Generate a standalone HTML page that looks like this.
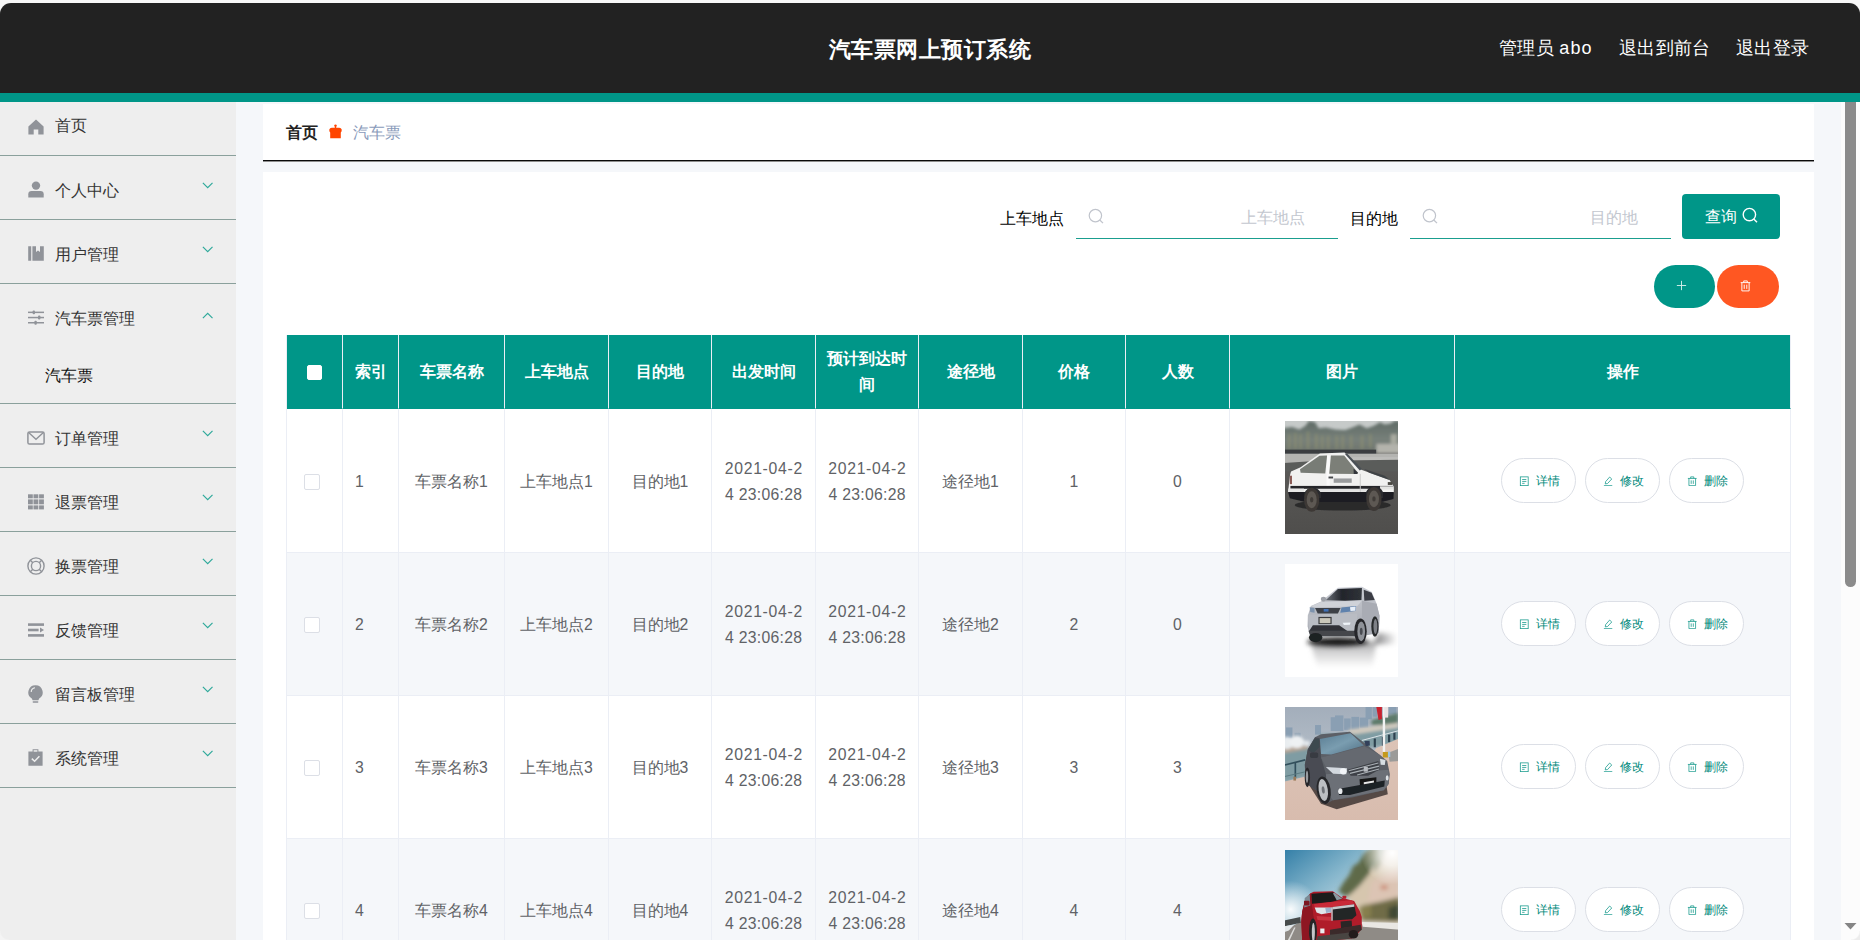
<!DOCTYPE html>
<html lang="zh">
<head>
<meta charset="utf-8">
<title>汽车票网上预订系统</title>
<style>
*{box-sizing:border-box;margin:0;padding:0}
html,body{width:1860px;height:940px;overflow:hidden}
body{position:relative;background:#f5f7fa;font-family:"Liberation Sans",sans-serif;color:#333;font-size:15.75px}
.abs{position:absolute}
/* header */
#topstrip{left:0;top:0;width:1860px;height:12px;background:#f7f7f7}
#header{left:0;top:3px;width:1860px;height:90px;background:#222;border-radius:11px 11px 0 0}
#teal{left:0;top:93px;width:1860px;height:9px;background:#009688}
#title{left:0;top:4px;width:1860px;height:90px;line-height:91px;text-align:center;color:#fff;font-size:22px;letter-spacing:0.5px;font-weight:bold}
.hr{top:3px;height:90px;line-height:91px;color:#fff;font-size:18px;letter-spacing:0.3px;white-space:nowrap}
/* sidebar */
#side{left:0;top:102px;width:236px;height:838px;background:#eee}
.mi{position:absolute;left:0;width:236px;height:64px;border-bottom:2px solid #8fa8a4}
.mi .tx{position:absolute;left:55px;top:0;height:64px;line-height:64px;font-size:15.75px;color:#333;white-space:nowrap}
.mi svg.ic{position:absolute;left:27px;top:23px;width:18px;height:18px}
.mi svg.ar{position:absolute;left:201px;top:24px;width:13px;height:13px}

#side svg{position:absolute}
.mt{position:absolute;left:55px;height:24px;line-height:24px;font-size:15.75px;color:#333;white-space:nowrap}
.ml{position:absolute;left:0;width:236px;height:1px;background:#8aa09c}
/* main */
#crumb{left:263px;top:104px;width:1551px;height:58px;background:linear-gradient(#fff 0,#fff 56px,#0a0a0a 56px,#0a0a0a 57px,#8f8f8f 57px,#8f8f8f 58px)}
#panel{left:263px;top:172px;width:1551px;height:768px;background:#fff}

/* crumb */
#crumb .home{position:absolute;left:23px;top:16.5px;height:24px;line-height:24px;font-size:15.75px;font-weight:bold;color:#222}
#crumb .cur{position:absolute;left:90px;top:17px;height:24px;line-height:24px;font-size:15.75px;color:#8a9bbb}
/* search */
.lab{position:absolute;height:24px;line-height:24px;font-size:15.75px;color:#000;white-space:nowrap}
.inp{position:absolute;height:45px;border-bottom:1px solid #1a9e8f}
.inp .ph{position:absolute;right:33px;top:11.5px;height:24px;line-height:24px;font-size:15.75px;color:#c3c7cf;white-space:nowrap}
.inp svg{position:absolute;left:12px;top:14px;width:17px;height:17px}
#qbtn{left:1682px;top:194px;width:98px;height:45px;background:#009688;border-radius:4px;color:#fff;font-size:15.75px}
#qbtn span{position:absolute;left:23px;top:11px;height:24px;line-height:24px}
#qbtn svg{position:absolute;left:60px;top:13.3px;width:17px;height:17px}
.pill{position:absolute;top:265px;height:43px;border-radius:22px}
/* table */
#tb{left:286px;top:335px;width:1505px;border-left:1px solid #ebeef5}
#tb .r{display:flex;width:1504px}
#tb .c{flex:none;position:relative;border-right:1px solid #ebeef5;border-bottom:1px solid #ebeef5;display:flex;align-items:center;justify-content:center;text-align:center;line-height:26px;font-size:15.75px;color:#606266}
#tb .h .c{height:74px;background:#009688;color:#fff;font-weight:bold;border-bottom-color:#009688}
#tb .b .c{height:143px;background:#fff;padding-top:2px}
#tb .b.first .c{height:144px;padding-top:3px}
#tb .b.first .ab{top:49px}
#tb .b.s .c{background:#f5f7fa}
.cb{width:16px;height:16px;border:1px solid #dcdfe6;border-radius:2px;background:#fff}
.ab{position:absolute;top:48px;width:75px;height:45px;border:1px solid #dcdfe6;border-radius:23px;background:#fff;color:#00897b;font-size:12px;line-height:43px;text-align:left}
.ab span{position:absolute;left:33.5px;top:1px;white-space:nowrap}
.ab svg{position:absolute;left:17px;top:16.5px;width:10.5px;height:10.5px}
.dt{white-space:nowrap}
.img{width:113px;height:113px;display:block}
#sbtrack{left:1841px;top:102px;width:19px;height:838px;background:#fcfcfc}
#sbthumb{left:1845px;top:96px;width:11px;height:491px;background:#8b8b8b;border-radius:6px}
</style>
</head>
<body>
<div id="topstrip" class="abs"></div>
<!-- MAIN -->
<div id="crumb" class="abs"><div class="home">首页</div>
<svg style="position:absolute;left:66px;top:20px;width:13px;height:15px" viewBox="0 0 13 15"><circle cx="6.5" cy="1.6" r="1.2" fill="#ff4500"/><rect x="5.8" y="1.6" width="1.4" height="4" fill="#ff4500"/><path fill="#ff4500" d="M1.2 14.3 V8.6 Q0 7.6 0.3 5.6 Q0.8 3.8 2.8 3.8 H10.2 Q12.2 3.8 12.7 5.6 Q13 7.6 11.8 8.6 V14.3 Z"/></svg>
<div class="cur">汽车票</div></div>
<div id="panel" class="abs"></div>
<div class="lab" style="left:1000px;top:206.5px">上车地点</div>
<div class="inp" style="left:1076px;top:194px;width:262px"><svg viewBox="0 0 17 17"><circle cx="7.4" cy="7.6" r="6.2" fill="none" stroke="#c0c4cc" stroke-width="1.2"/><path d="M11.8 12 L15 15.2" stroke="#c0c4cc" stroke-width="1.2" fill="none"/></svg><div class="ph">上车地点</div></div>
<div class="lab" style="left:1350px;top:206.5px">目的地</div>
<div class="inp" style="left:1410px;top:194px;width:261px"><svg viewBox="0 0 17 17"><circle cx="7.4" cy="7.6" r="6.2" fill="none" stroke="#c0c4cc" stroke-width="1.2"/><path d="M11.8 12 L15 15.2" stroke="#c0c4cc" stroke-width="1.2" fill="none"/></svg><div class="ph">目的地</div></div>
<div id="qbtn" class="abs"><span>查询</span><svg viewBox="0 0 17 17"><circle cx="7.4" cy="7.6" r="6.2" fill="none" stroke="#fff" stroke-width="1.4"/><path d="M11.8 12 L15 15.2" stroke="#fff" stroke-width="1.4" fill="none"/></svg></div>
<div class="pill" style="left:1654px;width:61px;background:#009688"><svg style="position:absolute;left:22px;top:15px;width:11px;height:11px" viewBox="0 0 13 13"><path d="M6.5 1 V12 M1 6.5 H12" stroke="#d6efeb" stroke-width="1.1" fill="none"/></svg></div>
<div class="pill" style="left:1717px;width:62px;background:#ff5722"><svg style="position:absolute;left:22.5px;top:14.5px;width:11px;height:12px" viewBox="0 0 13 14"><g fill="none" stroke="#fff" stroke-width="1.1"><path d="M0.8 3 H12.2 M4.4 3 V1 H8.6 V3 M2.2 3 V12.8 H10.8 V3 M5 5.4 V10.4 M8 5.4 V10.4"/></g></svg></div>
<div id="tb" class="abs">
<div class="r h"><div class="c" style="width:56px"><div class="cb" style="border-color:#fff;width:15px;height:15px;margin-left:-1px;margin-top:2px"></div></div><div class="c" style="width:56px">索引</div><div class="c" style="width:106px">车票名称</div><div class="c" style="width:104px">上车地点</div><div class="c" style="width:103px">目的地</div><div class="c" style="width:104px">出发时间</div><div class="c" style="width:103px"><div>预计到达时<br>间</div></div><div class="c" style="width:104px">途径地</div><div class="c" style="width:103px">价格</div><div class="c" style="width:104px">人数</div><div class="c" style="width:225px">图片</div><div class="c" style="width:336px">操作</div></div>
<div class="r b first"><div class="c" style="width:56px"><div class="cb" style="margin-left:-6px"></div></div><div class="c" style="width:56px"><span style="position:absolute;left:12px">1</span></div><div class="c" style="width:106px">车票名称1</div><div class="c" style="width:104px">上车地点1</div><div class="c" style="width:103px">目的地1</div><div class="c" style="width:104px"><div class="dt"><span style="letter-spacing:.7px;margin-right:-.7px">2021-04-2</span><br><span style="letter-spacing:.3px;margin-right:-.3px">4 23:06:28</span></div></div><div class="c" style="width:103px"><div class="dt"><span style="letter-spacing:.7px;margin-right:-.7px">2021-04-2</span><br><span style="letter-spacing:.3px;margin-right:-.3px">4 23:06:28</span></div></div><div class="c" style="width:104px">途径地1</div><div class="c" style="width:103px">1</div><div class="c" style="width:104px">0</div><div class="c" style="width:225px"><svg class="img" style="position:absolute;left:55px;top:12px" viewBox="0 0 940 940" preserveAspectRatio="none"><defs><linearGradient id="a1" x1="0" y1="0" x2="0" y2="1"><stop offset="0" stop-color="#626160"/><stop offset="0.5" stop-color="#585755"/><stop offset="1" stop-color="#4f4e4c"/></linearGradient><linearGradient id="t1" x1="0" y1="0" x2="0" y2="1"><stop offset="0" stop-color="#5f6b66"/><stop offset="0.6" stop-color="#77807a"/><stop offset="1" stop-color="#6d736c"/></linearGradient><filter id="b1" x="-5%" y="-5%" width="110%" height="110%"><feGaussianBlur stdDeviation="5"/></filter><filter id="b1b" x="-5%" y="-5%" width="110%" height="110%"><feGaussianBlur stdDeviation="12"/></filter><clipPath id="c1"><rect width="940" height="940"/></clipPath></defs><g clip-path="url(#c1)"><rect width="940" height="940" fill="url(#a1)"/><rect width="940" height="120" fill="#c6cac9"/><g filter="url(#b1b)"><path fill="url(#t1)" d="M-20 60 L60 50 L120 70 L170 40 L200 0 L250 10 L280 60 L340 55 L420 70 L500 75 L560 55 L620 30 L680 60 L740 40 L790 10 L830 30 L880 20 L910 0 L960 0 L960 260 L-20 260 Z"/><g fill="#8d9072" opacity=".7"><rect x="25" y="110" width="22" height="120"/><rect x="75" y="100" width="22" height="130"/><rect x="120" y="110" width="20" height="120"/><rect x="180" y="90" width="22" height="140"/><rect x="250" y="110" width="22" height="120"/><rect x="300" y="120" width="20" height="110"/><rect x="350" y="120" width="20" height="110"/><rect x="420" y="120" width="20" height="110"/><rect x="470" y="120" width="20" height="110"/><rect x="540" y="120" width="20" height="110"/><rect x="630" y="120" width="22" height="110"/><rect x="700" y="110" width="20" height="110"/></g><rect x="760" y="190" width="200" height="80" fill="#b3b3ac"/><rect x="880" y="110" width="50" height="80" fill="#a9aaa0"/></g><g filter="url(#b1)"><rect x="-10" y="238" width="768" height="36" fill="#3a3e41"/><rect x="-10" y="272" width="960" height="78" fill="#b4b4b1"/><rect x="560" y="300" width="400" height="30" fill="#bdbdba"/><path fill="#5a5b5a" d="M-10 350 L280 330 L950 322 L950 420 L-10 420 Z"/><ellipse cx="480" cy="700" rx="400" ry="45" fill="#2b2b2c"/><path fill="#f1f1f0" d="M50 420 L130 385 L290 270 L495 262 L635 405 L870 490 L905 545 L905 595 L25 595 L42 450 Z"/><rect x="345" y="286" width="28" height="260" fill="#fafafa"/><path fill="#1b1c22" d="M25 590 L905 590 L902 648 L812 672 L160 672 L40 642 Z"/><rect x="45" y="540" width="858" height="24" fill="#26272b"/><rect x="290" y="565" width="390" height="24" fill="#e2e2e2"/><rect x="28" y="562" width="130" height="28" fill="#e6e6e6"/><rect x="790" y="543" width="115" height="26" fill="#e4e4e2"/><path fill="#787c76" d="M125 402 L287 290 L350 286 L335 436 L130 430 Z"/><path fill="#7c7f78" d="M382 286 L492 286 L607 430 L600 441 L368 438 Z"/><path fill="#4a4f55" d="M497 272 L520 275 L640 400 L622 412 Z"/><path fill="#33363b" d="M570 395 L607 430 L600 441 L572 440 Z"/><path fill="#3a3d42" d="M660 400 L830 455 L870 490 L700 430 Z" opacity=".8"/><rect x="622" y="440" width="8" height="150" fill="#c9c9c9"/><rect x="362" y="462" width="38" height="16" fill="#44464a"/><rect x="405" y="478" width="150" height="36" fill="#8a8c8e" opacity=".85"/><rect x="40" y="455" width="18" height="70" fill="#8a5a55"/><rect x="855" y="508" width="38" height="24" fill="#4c4a44"/><path fill="#2a2b2f" d="M160 600 A80 85 0 0 1 300 600 L300 640 L160 640 Z"/><path fill="#2a2b2f" d="M672 595 A80 85 0 0 1 815 590 L815 640 L672 640 Z"/><ellipse cx="222" cy="655" rx="64" ry="100" fill="#3c3835"/><ellipse cx="740" cy="648" rx="64" ry="100" fill="#3c3835"/><ellipse cx="222" cy="655" rx="42" ry="70" fill="#5d5852"/><ellipse cx="740" cy="648" rx="42" ry="70" fill="#5d5852"/><ellipse cx="222" cy="655" rx="14" ry="22" fill="#3f3b37"/><ellipse cx="740" cy="648" rx="14" ry="22" fill="#3f3b37"/></g></g></svg></div><div class="c" style="width:336px"><div class="ab" style="left:46px"><svg viewBox="0 0 12 12"><g fill="none" stroke="#1a9c8e" stroke-width="0.9"><rect x="1.5" y="1" width="9" height="10"/><path d="M3.6 4 H8.4 M3.6 6.2 H8.4 M3.6 8.4 H6.4"/></g></svg><span>详情</span></div><div class="ab" style="left:130px"><svg viewBox="0 0 12 12"><g fill="none" stroke="#1a9c8e" stroke-width="0.9"><path d="M7.6 1.2 L10 3.4 L5.2 8.6 L2.6 9 L3 6.4 Z M1 11 H10.6"/></g></svg><span>修改</span></div><div class="ab" style="left:214px"><svg viewBox="0 0 12 12"><g fill="none" stroke="#1a9c8e" stroke-width="0.9"><path d="M1 2.8 H11 M4.2 2.8 V1 H7.8 V2.8 M2.2 2.8 V11 H9.8 V2.8 M4.8 5 V9 M7.2 5 V9"/></g></svg><span>删除</span></div></div></div>
<div class="r b s"><div class="c" style="width:56px"><div class="cb" style="margin-left:-6px"></div></div><div class="c" style="width:56px"><span style="position:absolute;left:12px">2</span></div><div class="c" style="width:106px">车票名称2</div><div class="c" style="width:104px">上车地点2</div><div class="c" style="width:103px">目的地2</div><div class="c" style="width:104px"><div class="dt"><span style="letter-spacing:.7px;margin-right:-.7px">2021-04-2</span><br><span style="letter-spacing:.3px;margin-right:-.3px">4 23:06:28</span></div></div><div class="c" style="width:103px"><div class="dt"><span style="letter-spacing:.7px;margin-right:-.7px">2021-04-2</span><br><span style="letter-spacing:.3px;margin-right:-.3px">4 23:06:28</span></div></div><div class="c" style="width:104px">途径地2</div><div class="c" style="width:103px">2</div><div class="c" style="width:104px">0</div><div class="c" style="width:225px"><svg class="img" style="position:absolute;left:55px;top:11px" viewBox="0 0 940 940" preserveAspectRatio="none"><defs><linearGradient id="r2" x1="0" y1="0" x2="0" y2="1"><stop offset="0" stop-color="#3a3a3c"/><stop offset="0.35" stop-color="#9a9a9c"/><stop offset="1" stop-color="#fff"/></linearGradient><linearGradient id="s2" x1="0" y1="0" x2="1" y2="0"><stop offset="0" stop-color="#7e7e80"/><stop offset="1" stop-color="#fff"/></linearGradient><linearGradient id="w2" x1="0" y1="0" x2="1" y2="0"><stop offset="0" stop-color="#6d727a"/><stop offset="0.45" stop-color="#22252b"/><stop offset="1" stop-color="#2f3238"/></linearGradient><linearGradient id="bd2" x1="0" y1="0" x2="0" y2="1"><stop offset="0" stop-color="#c9ccd3"/><stop offset="1" stop-color="#a4a7af"/></linearGradient><filter id="b2" x="-5%" y="-5%" width="110%" height="110%"><feGaussianBlur stdDeviation="6"/></filter><filter id="b2b" x="-20%" y="-20%" width="140%" height="140%"><feGaussianBlur stdDeviation="22"/></filter><clipPath id="c2"><rect width="940" height="940"/></clipPath></defs><g clip-path="url(#c2)"><rect width="940" height="940" fill="#fff"/><g filter="url(#b2b)"><path fill="url(#r2)" d="M215 660 L760 640 L730 860 L270 860 Z" opacity=".5"/><path fill="url(#s2)" d="M770 575 L930 585 L930 665 L740 670 Z"/><ellipse cx="440" cy="650" rx="255" ry="40" fill="#141416"/></g><g filter="url(#b2)"><path fill="url(#bd2)" d="M440 198 L640 190 L722 232 L762 330 L786 430 L780 575 L690 590 L600 600 L210 600 L188 520 L190 430 L215 350 L300 312 Z"/><path fill="#a9acb4" d="M640 305 L762 330 L786 430 L780 570 L690 585 L640 440 Z"/><path fill="url(#w2)" d="M338 302 L440 207 L640 200 L636 300 L500 306 Z"/><path fill="#3a3d44" d="M655 215 L720 240 L746 300 L660 306 Z"/><path fill="#cfd2d8" d="M215 352 L300 316 L640 306 L600 352 L250 362 Z"/><ellipse cx="320" cy="292" rx="22" ry="20" fill="#9da0a7"/><path fill="#3c4047" d="M250 366 L462 366 L440 412 L272 412 Z"/><rect x="322" y="374" width="40" height="22" fill="#3f6fb5"/><path fill="#5f82ad" d="M470 362 L592 350 L586 392 L460 406 Z"/><path fill="#e8f0fa" d="M540 360 L588 354 L584 388 L545 392 Z"/><path fill="#7d93ad" d="M205 360 L246 366 L246 406 L210 400 Z"/><path fill="#b9bcc3" d="M190 422 L600 412 L600 560 L200 560 Z"/><rect x="278" y="440" width="110" height="60" fill="#3a3b3d"/><rect x="288" y="450" width="90" height="42" fill="#cbc7ba"/><path fill="#eef3f8" d="M480 488 L545 486 L540 506 L490 508 Z"/><path fill="#303338" d="M232 510 L450 510 L525 562 L198 562 Z"/><path fill="#44474c" d="M195 556 L600 556 L590 602 L212 602 Z"/><ellipse cx="748" cy="520" rx="30" ry="86" fill="#28292c"/><ellipse cx="752" cy="520" rx="16" ry="62" fill="#7e8187"/><ellipse cx="628" cy="560" rx="52" ry="106" fill="#26272a"/><ellipse cx="634" cy="560" rx="32" ry="82" fill="#8f9298"/><ellipse cx="634" cy="560" rx="12" ry="30" fill="#4a4c51"/><ellipse cx="255" cy="612" rx="56" ry="38" fill="#1f2023"/></g></g></svg></div><div class="c" style="width:336px"><div class="ab" style="left:46px"><svg viewBox="0 0 12 12"><g fill="none" stroke="#1a9c8e" stroke-width="0.9"><rect x="1.5" y="1" width="9" height="10"/><path d="M3.6 4 H8.4 M3.6 6.2 H8.4 M3.6 8.4 H6.4"/></g></svg><span>详情</span></div><div class="ab" style="left:130px"><svg viewBox="0 0 12 12"><g fill="none" stroke="#1a9c8e" stroke-width="0.9"><path d="M7.6 1.2 L10 3.4 L5.2 8.6 L2.6 9 L3 6.4 Z M1 11 H10.6"/></g></svg><span>修改</span></div><div class="ab" style="left:214px"><svg viewBox="0 0 12 12"><g fill="none" stroke="#1a9c8e" stroke-width="0.9"><path d="M1 2.8 H11 M4.2 2.8 V1 H7.8 V2.8 M2.2 2.8 V11 H9.8 V2.8 M4.8 5 V9 M7.2 5 V9"/></g></svg><span>删除</span></div></div></div>
<div class="r b"><div class="c" style="width:56px"><div class="cb" style="margin-left:-6px"></div></div><div class="c" style="width:56px"><span style="position:absolute;left:12px">3</span></div><div class="c" style="width:106px">车票名称3</div><div class="c" style="width:104px">上车地点3</div><div class="c" style="width:103px">目的地3</div><div class="c" style="width:104px"><div class="dt"><span style="letter-spacing:.7px;margin-right:-.7px">2021-04-2</span><br><span style="letter-spacing:.3px;margin-right:-.3px">4 23:06:28</span></div></div><div class="c" style="width:103px"><div class="dt"><span style="letter-spacing:.7px;margin-right:-.7px">2021-04-2</span><br><span style="letter-spacing:.3px;margin-right:-.3px">4 23:06:28</span></div></div><div class="c" style="width:104px">途径地3</div><div class="c" style="width:103px">3</div><div class="c" style="width:104px">3</div><div class="c" style="width:225px"><svg class="img" style="position:absolute;left:55px;top:11px" viewBox="0 0 940 940" preserveAspectRatio="none"><defs><linearGradient id="k3" x1="0" y1="0" x2="0" y2="1"><stop offset="0" stop-color="#a3aebb"/><stop offset="1" stop-color="#c9d0d7"/></linearGradient><linearGradient id="g3" x1="0" y1="0" x2="0" y2="1"><stop offset="0" stop-color="#dcc4b7"/><stop offset="1" stop-color="#d8bcae"/></linearGradient><linearGradient id="ws3" x1="0" y1="0" x2="1" y2="1"><stop offset="0" stop-color="#5a7d93"/><stop offset="0.5" stop-color="#7a9db0"/><stop offset="1" stop-color="#4f6f84"/></linearGradient><filter id="b3" x="-5%" y="-5%" width="110%" height="110%"><feGaussianBlur stdDeviation="6"/></filter><filter id="b3b" x="-10%" y="-10%" width="120%" height="120%"><feGaussianBlur stdDeviation="14"/></filter><clipPath id="c3"><rect width="940" height="940"/></clipPath></defs><g clip-path="url(#c3)"><rect width="940" height="940" fill="url(#k3)"/><g filter="url(#b3)"><g fill="#8a9fb3"><rect x="380" y="85" width="36" height="115"/><rect x="416" y="70" width="70" height="130"/><rect x="492" y="95" width="54" height="95"/><rect x="552" y="82" width="64" height="108"/><rect x="622" y="88" width="70" height="85"/><rect x="670" y="-10" width="52" height="112"/><rect x="730" y="-10" width="36" height="90"/><rect x="862" y="-10" width="64" height="72"/><rect x="8" y="170" width="54" height="90"/><rect x="250" y="150" width="50" height="80"/><rect x="80" y="215" width="50" height="40" opacity=".6"/></g></g><g filter="url(#b3b)"><path fill="#5d7a6a" d="M720 110 L800 85 L940 50 L940 150 L720 150 Z"/><path fill="#cfc9be" d="M520 190 L940 130 L940 200 L560 235 Z"/><path fill="#7f9ca3" d="M-10 370 L200 335 L300 225 L600 225 L950 170 L950 300 L700 340 L180 580 L-10 625 Z"/><path fill="#b7a595" d="M-10 340 L190 322 L190 350 L-10 385 Z"/><ellipse cx="15" cy="300" rx="55" ry="52" fill="#e9edf0"/><ellipse cx="98" cy="292" rx="62" ry="52" fill="#eef1f3"/><ellipse cx="182" cy="302" rx="26" ry="24" fill="#e3e8ec"/></g><g filter="url(#b3)"><path fill="url(#g3)" d="M-10 622 L175 578 L700 420 L760 342 L950 262 L950 950 L-10 950 Z"/><path fill="#9b9b99" d="M860 380 L950 345 L950 450 L870 455 Z"/><g stroke="#33505c" stroke-width="14" fill="none"><path d="M-10 485 L168 440"/><path d="M86 462 L86 590"/><path d="M-10 580 L165 540" stroke="#5a7a80" stroke-width="8"/></g><g stroke="#2f4250" stroke-width="18" fill="none"><path d="M747 262 L747 335"/><path d="M815 250 L815 322"/><path d="M866 230 L866 292"/><path d="M910 212 L910 272"/></g><path d="M640 278 L950 196" stroke="#dfe6ea" stroke-width="8" fill="none"/><rect x="70" y="580" width="22" height="32" fill="#9a7a5a"/><rect x="813" y="-10" width="20" height="385" fill="#f2f2f2"/><path fill="#c9202d" d="M758 -10 L806 -10 L806 100 L778 108 Z"/><rect x="826" y="-10" width="32" height="98" fill="#ebe3e3"/><rect x="814" y="374" width="44" height="46" fill="#c4991c"/><rect x="856" y="370" width="20" height="46" fill="#9fc5df"/><path fill="#4a3e3c" d="M195 640 L300 805 L430 850 L855 725 L845 660 Z" opacity=".92"/><path fill="#5b5f66" d="M250 252 L300 226 L540 205 L660 300 L790 400 L850 450 L872 560 L862 640 L822 692 L560 752 L400 776 L352 800 L300 790 L272 700 L200 652 L170 600 L165 480 L190 352 Z"/><path fill="#484c53" d="M190 352 L250 252 L290 262 L300 420 L340 560 L352 800 L300 790 L272 700 L200 652 L170 600 L165 480 Z"/><path fill="#3c4850" d="M196 362 L240 272 L282 262 L286 332 L236 382 Z"/><path fill="url(#ws3)" d="M290 266 L545 218 L656 320 L386 396 L300 392 Z"/><path fill="#656970" d="M386 400 L660 326 L790 400 L822 442 L520 522 L340 500 L300 420 Z"/><path fill="#6c7077" d="M340 560 L862 522 L862 640 L822 692 L400 776 L352 720 Z"/><rect x="208" y="378" width="68" height="46" rx="14" fill="#383b42"/><path fill="#33415a" d="M660 282 L704 280 L706 320 L672 326 Z"/><path fill="#d3d9df" d="M340 500 L516 510 L510 560 L400 556 Z"/><ellipse cx="485" cy="535" rx="28" ry="26" fill="#f2f5f8"/><path fill="#d7dde2" d="M790 430 L836 440 L830 482 L796 480 Z"/><path fill="#3d4046" d="M520 522 L776 450 L786 520 L692 572 L546 572 Z"/><g stroke="#aab0b6" stroke-width="9" fill="none"><path d="M530 530 L776 466"/><path d="M540 552 L782 492"/><path d="M600 566 L782 515"/></g><rect x="655" y="498" width="34" height="40" fill="#b8bcc1"/><path fill="#141517" d="M620 602 L760 585 L760 660 L626 682 Z"/><path fill="#e8e8e8" d="M655 625 L740 612 L740 632 L656 648 Z"/><path fill="#1f2125" d="M440 682 L830 612 L826 662 L540 732 L450 732 Z"/><ellipse cx="460" cy="700" rx="18" ry="24" fill="#e6e9ec"/><ellipse cx="850" cy="590" rx="12" ry="22" fill="#dfe3e6"/><ellipse cx="186" cy="585" rx="22" ry="82" fill="#26272a"/><ellipse cx="183" cy="580" rx="10" ry="52" fill="#9a9da1"/><ellipse cx="322" cy="692" rx="58" ry="115" fill="#27282b" transform="rotate(-8 322 692)"/><ellipse cx="318" cy="690" rx="38" ry="92" fill="#bcbfc3" transform="rotate(-8 318 690)"/><ellipse cx="318" cy="690" rx="12" ry="30" fill="#6d7076" transform="rotate(-8 318 690)"/></g></g></svg></div><div class="c" style="width:336px"><div class="ab" style="left:46px"><svg viewBox="0 0 12 12"><g fill="none" stroke="#1a9c8e" stroke-width="0.9"><rect x="1.5" y="1" width="9" height="10"/><path d="M3.6 4 H8.4 M3.6 6.2 H8.4 M3.6 8.4 H6.4"/></g></svg><span>详情</span></div><div class="ab" style="left:130px"><svg viewBox="0 0 12 12"><g fill="none" stroke="#1a9c8e" stroke-width="0.9"><path d="M7.6 1.2 L10 3.4 L5.2 8.6 L2.6 9 L3 6.4 Z M1 11 H10.6"/></g></svg><span>修改</span></div><div class="ab" style="left:214px"><svg viewBox="0 0 12 12"><g fill="none" stroke="#1a9c8e" stroke-width="0.9"><path d="M1 2.8 H11 M4.2 2.8 V1 H7.8 V2.8 M2.2 2.8 V11 H9.8 V2.8 M4.8 5 V9 M7.2 5 V9"/></g></svg><span>删除</span></div></div></div>
<div class="r b s"><div class="c" style="width:56px"><div class="cb" style="margin-left:-6px"></div></div><div class="c" style="width:56px"><span style="position:absolute;left:12px">4</span></div><div class="c" style="width:106px">车票名称4</div><div class="c" style="width:104px">上车地点4</div><div class="c" style="width:103px">目的地4</div><div class="c" style="width:104px"><div class="dt"><span style="letter-spacing:.7px;margin-right:-.7px">2021-04-2</span><br><span style="letter-spacing:.3px;margin-right:-.3px">4 23:06:28</span></div></div><div class="c" style="width:103px"><div class="dt"><span style="letter-spacing:.7px;margin-right:-.7px">2021-04-2</span><br><span style="letter-spacing:.3px;margin-right:-.3px">4 23:06:28</span></div></div><div class="c" style="width:104px">途径地4</div><div class="c" style="width:103px">4</div><div class="c" style="width:104px">4</div><div class="c" style="width:225px"><svg class="img" style="position:absolute;left:55px;top:11px" viewBox="0 0 1180 1180" preserveAspectRatio="none"><defs><linearGradient id="k4" x1="0" y1="0" x2="0.75" y2="1"><stop offset="0" stop-color="#3580a8"/><stop offset="0.35" stop-color="#86b6cc"/><stop offset="0.7" stop-color="#d3e3ea"/><stop offset="1" stop-color="#eef3f4"/></linearGradient><radialGradient id="f4" cx="1120" cy="30" r="330" gradientUnits="userSpaceOnUse"><stop offset="0" stop-color="#fff" stop-opacity="1"/><stop offset="0.4" stop-color="#fff" stop-opacity=".75"/><stop offset="1" stop-color="#fff" stop-opacity="0"/></radialGradient><radialGradient id="l4" cx="60" cy="620" r="300" gradientUnits="userSpaceOnUse"><stop offset="0" stop-color="#fff" stop-opacity=".95"/><stop offset="1" stop-color="#fff" stop-opacity="0"/></radialGradient><filter id="b4" x="-5%" y="-5%" width="110%" height="110%"><feGaussianBlur stdDeviation="7"/></filter><filter id="b4b" x="-10%" y="-10%" width="120%" height="120%"><feGaussianBlur stdDeviation="20"/></filter><clipPath id="c4"><rect width="1180" height="1180"/></clipPath></defs><g clip-path="url(#c4)"><rect width="1180" height="1180" fill="url(#k4)"/><rect width="1180" height="1180" fill="url(#l4)"/><g filter="url(#b4b)"><path fill="#d6c6ae" d="M640 480 L760 330 L900 200 L1000 60 L1060 -20 L1200 -20 L1200 780 L800 760 Z"/><path fill="#dcc4b4" d="M900 330 L1200 170 L1200 480 L860 560 Z"/><path fill="#5f6b48" d="M555 430 L610 340 L670 260 L710 170 L770 130 L830 30 L900 -20 L980 -20 L940 120 L880 250 L790 360 L700 450 L640 490 L595 460 Z"/><path fill="#6c7048" d="M920 -20 L1060 -20 L1010 150 L930 230 Z" opacity=".8"/><path fill="#6f6c46" d="M800 580 L1000 540 L1200 490 L1200 750 L800 740 Z"/><path fill="#8c8550" d="M760 600 L900 560 L900 700 L790 720 Z" opacity=".8"/><path fill="#3f4a34" d="M1080 600 L1200 560 L1200 720 L1080 730 Z"/><rect x="1000" y="370" width="70" height="40" fill="#c26a50" opacity=".7"/></g><rect width="1180" height="1180" fill="url(#f4)"/><g filter="url(#b4)"><path fill="#8f8b86" d="M-10 840 L170 745 L1200 790 L1200 1200 L-10 1200 Z"/><path fill="#e9e7e3" d="M800 752 L1200 762 L1200 832 L812 802 Z"/><path fill="#464b4c" d="M-10 735 L160 700 L165 760 L-10 800 Z"/><path fill="#e4e8ea" d="M-10 795 L95 780 L40 840 L-10 860 Z"/><path fill="#dcdcda" d="M95 810 L110 810 L50 940 L30 940 Z"/><path fill="#b01e2b" d="M265 452 L300 436 L500 430 L600 500 L722 532 L782 640 L802 700 L802 822 L762 872 L700 925 L330 960 L180 960 L170 740 L180 640 L210 520 Z"/><path fill="#8e1722" d="M210 520 L265 452 L280 560 L300 700 L330 960 L180 960 L170 740 L180 640 Z"/><path fill="#1c1a1c" d="M275 456 L500 441 L602 510 L500 541 L282 562 Z"/><path fill="#9fb0b8" d="M500 452 L520 450 L598 508 L540 525 Z" opacity=".85"/><path fill="#c92b37" d="M300 566 L500 541 L700 526 L722 560 L500 592 L312 602 Z"/><path fill="#7b8c96" d="M206 502 L258 462 L264 580 L200 600 Z"/><rect x="198" y="530" width="58" height="50" rx="10" fill="#7c1420"/><rect x="600" y="478" width="40" height="32" rx="8" fill="#b3222e"/><path fill="#dfe6ea" d="M310 600 L490 600 L486 652 L380 672 L330 652 Z"/><path fill="#6f8fb8" d="M420 606 L486 604 L484 648 L430 658 Z" opacity=".6"/><path fill="#242528" d="M495 600 L722 570 L746 682 L700 722 L495 737 Z"/><path fill="#c7c9cc" d="M495 596 L722 566 L724 592 L495 622 Z"/><path fill="#c7c9cc" d="M484 600 L498 600 L498 740 L484 740 Z"/><path fill="#2a2527" d="M580 746 L696 736 L700 802 L586 816 Z"/><path fill="#3b2a2b" d="M470 832 L790 780 L802 832 L700 902 L470 902 Z"/><path fill="#4a4442" d="M340 900 L760 850 L700 925 L330 960 Z"/><rect x="368" y="820" width="44" height="50" fill="#e9ecee"/><path fill="#d84450" d="M330 690 L480 700 L480 740 L340 730 Z" opacity=".6"/><ellipse cx="292" cy="850" rx="42" ry="135" fill="#262628"/><ellipse cx="296" cy="860" rx="16" ry="100" fill="#c4c6c9"/><ellipse cx="715" cy="880" rx="50" ry="45" fill="#221d1e"/></g></g></svg></div><div class="c" style="width:336px"><div class="ab" style="left:46px"><svg viewBox="0 0 12 12"><g fill="none" stroke="#1a9c8e" stroke-width="0.9"><rect x="1.5" y="1" width="9" height="10"/><path d="M3.6 4 H8.4 M3.6 6.2 H8.4 M3.6 8.4 H6.4"/></g></svg><span>详情</span></div><div class="ab" style="left:130px"><svg viewBox="0 0 12 12"><g fill="none" stroke="#1a9c8e" stroke-width="0.9"><path d="M7.6 1.2 L10 3.4 L5.2 8.6 L2.6 9 L3 6.4 Z M1 11 H10.6"/></g></svg><span>修改</span></div><div class="ab" style="left:214px"><svg viewBox="0 0 12 12"><g fill="none" stroke="#1a9c8e" stroke-width="0.9"><path d="M1 2.8 H11 M4.2 2.8 V1 H7.8 V2.8 M2.2 2.8 V11 H9.8 V2.8 M4.8 5 V9 M7.2 5 V9"/></g></svg><span>删除</span></div></div></div>
</div>
<div id="sbtrack" class="abs"></div>
<div id="sbthumb" class="abs"></div>
<svg class="abs" style="left:1844px;top:923px;width:13px;height:7px" viewBox="0 0 13 7"><path d="M0.5 0 H12.5 L6.5 6.5 Z" fill="#858585"/></svg>
<!-- SIDEBAR -->
<div id="side" class="abs">
<svg class="ic" viewBox="0 0 16 16" style="left:28px;top:17px;width:16px;height:16px"><path fill="#909399" d="M8 0.6 L15.6 7.4 V15.4 H10.3 V10.4 H5.7 V15.4 H0.4 V7.4 Z"/></svg>
<div class="mt" style="top:12.0px">首页</div>
<div class="ml" style="top:53px"></div>
<svg class="ic" viewBox="0 0 16 17" style="left:28px;top:79px;width:16px;height:17px"><circle cx="8" cy="4.6" r="4.2" fill="#909399"/><path fill="#909399" d="M0.3 16.6 V13.2 Q0.3 10 3.6 10 H12.4 Q15.7 10 15.7 13.2 V16.6 Z"/></svg>
<div class="mt" style="top:77.0px">个人中心</div>
<div class="ml" style="top:117px"></div>
<svg class="ar" viewBox="0 0 13 8" style="left:202px;top:80.0px;width:11.4px;height:7px"><path d="M1 1 L6.5 6.5 L12 1" fill="none" stroke="#2fa99b" stroke-width="1.35"/></svg>
<svg class="ic" viewBox="0 0 16 15" style="left:28px;top:144px;width:16px;height:15px"><path fill="#909399" d="M0.2 0.3 H3.2 V14.7 H0.2 Z M4.4 0.3 H8 V6 L10 4.4 L12 6 V0.3 H15.8 V14.7 H4.4 Z"/></svg>
<div class="mt" style="top:141.0px">用户管理</div>
<div class="ml" style="top:181px"></div>
<svg class="ar" viewBox="0 0 13 8" style="left:202px;top:144.0px;width:11.4px;height:7px"><path d="M1 1 L6.5 6.5 L12 1" fill="none" stroke="#2fa99b" stroke-width="1.35"/></svg>
<svg class="ic" viewBox="0 0 16 15" style="left:28px;top:208px;width:16px;height:15px"><g fill="#909399"><rect x="0" y="1.6" width="16" height="1.5"/><rect x="0" y="6.8" width="16" height="1.5"/><rect x="0" y="12" width="16" height="1.5"/><rect x="4.6" y="0.4" width="2.4" height="3.9" rx="1"/><rect x="10" y="5.6" width="2.4" height="3.9" rx="1"/><rect x="6.4" y="10.8" width="2.4" height="3.9" rx="1"/></g></svg>
<div class="mt" style="top:205.0px">汽车票管理</div>
<svg class="ar" viewBox="0 0 13 8" style="left:202px;top:210.0px;width:11.4px;height:7px"><path d="M1 7 L6.5 1.5 L12 7" fill="none" stroke="#2fa99b" stroke-width="1.35"/></svg>
<svg class="ic" viewBox="0 0 18 14" style="left:27px;top:328.5px;width:18px;height:14px"><rect x="0.9" y="0.9" width="16.2" height="12.2" rx="1.6" fill="none" stroke="#909399" stroke-width="1.5"/><path d="M1.6 1.6 L9 8.2 L16.4 1.6" fill="none" stroke="#909399" stroke-width="1.4"/></svg>
<div class="mt" style="top:325.0px">订单管理</div>
<div class="ml" style="top:365px"></div>
<svg class="ar" viewBox="0 0 13 8" style="left:202px;top:328.0px;width:11.4px;height:7px"><path d="M1 1 L6.5 6.5 L12 1" fill="none" stroke="#2fa99b" stroke-width="1.35"/></svg>
<svg class="ic" viewBox="0 0 16 16" style="left:28px;top:391.5px;width:16px;height:16px"><g fill="#909399"><rect x="0" y="0.3" width="4.8" height="4"/><rect x="0" y="5.4" width="4.8" height="4.9"/><rect x="0" y="11.4" width="4.8" height="4"/><rect x="5.5" y="0.3" width="4.8" height="4"/><rect x="5.5" y="5.4" width="4.8" height="4.9"/><rect x="5.5" y="11.4" width="4.8" height="4"/><rect x="11.1" y="0.3" width="4.8" height="4"/><rect x="11.1" y="5.4" width="4.8" height="4.9"/><rect x="11.1" y="11.4" width="4.8" height="4"/></g></svg>
<div class="mt" style="top:389.0px">退票管理</div>
<div class="ml" style="top:429px"></div>
<svg class="ar" viewBox="0 0 13 8" style="left:202px;top:392.0px;width:11.4px;height:7px"><path d="M1 1 L6.5 6.5 L12 1" fill="none" stroke="#2fa99b" stroke-width="1.35"/></svg>
<svg class="ic" viewBox="0 0 18 18" style="left:27px;top:454.5px;width:18px;height:18px"><g fill="none" stroke="#909399" stroke-width="1.4"><circle cx="9" cy="9" r="8.1"/><circle cx="9" cy="9" r="4.6"/><path d="M3.3 3.3 L5.8 5.8 M14.7 3.3 L12.2 5.8 M3.3 14.7 L5.8 12.2 M14.7 14.7 L12.2 12.2"/></g></svg>
<div class="mt" style="top:453.0px">换票管理</div>
<div class="ml" style="top:493px"></div>
<svg class="ar" viewBox="0 0 13 8" style="left:202px;top:456.0px;width:11.4px;height:7px"><path d="M1 1 L6.5 6.5 L12 1" fill="none" stroke="#2fa99b" stroke-width="1.35"/></svg>
<svg class="ic" viewBox="0 0 16 14" style="left:28px;top:521px;width:16px;height:14px"><g fill="#909399"><rect x="0" y="0.3" width="16" height="2.6"/><rect x="0" y="5.7" width="10.6" height="2.6"/><rect x="0" y="11.1" width="16" height="2.6"/><path d="M12 4.4 L16 7 L12 9.6 Z"/></g></svg>
<div class="mt" style="top:517.0px">反馈管理</div>
<div class="ml" style="top:557px"></div>
<svg class="ar" viewBox="0 0 13 8" style="left:202px;top:520.0px;width:11.4px;height:7px"><path d="M1 1 L6.5 6.5 L12 1" fill="none" stroke="#2fa99b" stroke-width="1.35"/></svg>
<svg class="ic" viewBox="0 0 15 18" style="left:28px;top:583px;width:15px;height:18px"><path fill="#909399" d="M7.5 0.2 A7.1 7.1 0 0 1 11.2 13.4 L10.4 15.2 H4.6 L3.8 13.4 A7.1 7.1 0 0 1 7.5 0.2 Z"/><rect x="4.6" y="16.2" width="5.8" height="1.5" rx="0.7" fill="#909399"/><path d="M3.2 7 A4.4 4.4 0 0 1 7 2.8" fill="none" stroke="#eee" stroke-width="1.1"/></svg>
<div class="mt" style="top:581.0px">留言板管理</div>
<div class="ml" style="top:621px"></div>
<svg class="ar" viewBox="0 0 13 8" style="left:202px;top:584.0px;width:11.4px;height:7px"><path d="M1 1 L6.5 6.5 L12 1" fill="none" stroke="#2fa99b" stroke-width="1.35"/></svg>
<svg class="ic" viewBox="0 0 15 17" style="left:28px;top:647px;width:15px;height:17px"><path fill="#909399" d="M0.4 2.4 H4.6 V0.3 H10.4 V2.4 H14.6 V16.8 H0.4 Z"/><rect x="5.6" y="1.2" width="3.8" height="1.5" fill="#eee"/><path d="M3.8 9.6 L6.6 12.2 L11.4 7.2" fill="none" stroke="#eee" stroke-width="1.5"/></svg>
<div class="mt" style="top:645.0px">系统管理</div>
<div class="ml" style="top:685px"></div>
<svg class="ar" viewBox="0 0 13 8" style="left:202px;top:648.0px;width:11.4px;height:7px"><path d="M1 1 L6.5 6.5 L12 1" fill="none" stroke="#2fa99b" stroke-width="1.35"/></svg>
<div class="mt" style="left:45px;top:262px;color:#111">汽车票</div>
<div class="ml" style="top:301px"></div>
</div>
<!-- HEADER -->
<div id="header" class="abs"></div>
<div id="teal" class="abs"></div>
<div class="abs" style="left:0;top:931px;width:9px;height:9px;background:radial-gradient(circle at 100% 0,rgba(247,247,247,0) 8px,#f4f4f4 9.5px)"></div>
<div class="abs" style="left:1851px;top:931px;width:9px;height:9px;background:radial-gradient(circle at 0 0,rgba(247,247,247,0) 8px,#ececec 9.5px)"></div>
<div id="title" class="abs">汽车票网上预订系统</div>
<div class="abs hr" style="left:1499px">管理员 <span style="letter-spacing:1.2px">abo</span></div>
<div class="abs hr" style="left:1619px">退出到前台</div>
<div class="abs hr" style="left:1736px">退出登录</div>
</body>
</html>
